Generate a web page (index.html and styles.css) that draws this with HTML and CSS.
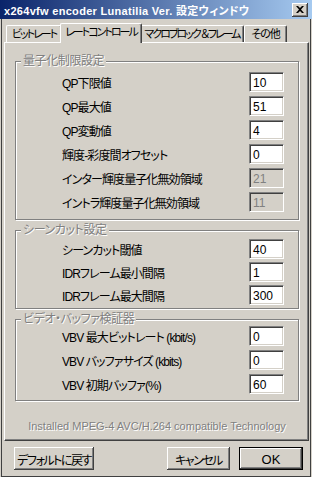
FILE: index.html
```html
<!DOCTYPE html>
<html lang="ja">
<head>
    <meta charset="UTF-8">
    <title>x264vfw encoder Lunatilia Ver. 設定ウィンドウ</title>
    <link rel="stylesheet" href="styles.css">
</head>
<body>
    <div class="window">
        <div class="titlebar">
            <span class="title">x264vfw encoder Lunatilia Ver. 設定ウィンドウ</span>
            <div class="close">
                <svg width="8" height="7" viewBox="0 0 8 7"><path d="M0 0h2l2 2 2-2h2L5 3.5 8 7H6L4 5 2 7H0l3-3.5z" fill="#000"/></svg>
            </div>
        </div>
        <div class="content">
            <div class="tabs">
                <div class="tab t1">ビットレート</div>
                <div class="tab t2 active">レートコントロール</div>
                <div class="tab t3">マクロブロック ＆フレーム</div>
                <div class="tab t4">その他</div>
            </div>
            <div class="panel">
                <div class="group g1">
                    <span class="legend">量子化制限設定</span>
                    <div class="row"><span>QP下限値</span><div class="field">10</div></div>
                    <div class="row"><span>QP最大値</span><div class="field">51</div></div>
                    <div class="row"><span>QP変動値</span><div class="field">4</div></div>
                    <div class="row"><span>輝度-彩度間オフセット</span><div class="field">0</div></div>
                    <div class="row"><span>インター輝度量子化無効領域</span><div class="field off">21</div></div>
                    <div class="row"><span>イントラ輝度量子化無効領域</span><div class="field off">11</div></div>
                </div>
                <div class="group g2">
                    <span class="legend">シーンカット設定</span>
                    <div class="row"><span>シーンカット閾値</span><div class="field">40</div></div>
                    <div class="row"><span>IDRフレーム最小間隔</span><div class="field">1</div></div>
                    <div class="row"><span>IDRフレーム最大間隔</span><div class="field">300</div></div>
                </div>
                <div class="group g3">
                    <span class="legend">ビデオ・バッファ検証器</span>
                    <div class="row"><span>VBV 最大ビットレート (kbit/s)</span><div class="field">0</div></div>
                    <div class="row"><span>VBV バッファサイズ (kbits)</span><div class="field">0</div></div>
                    <div class="row"><span>VBV 初期バッファ(%)</span><div class="field">60</div></div>
                </div>
                <div class="tech">Installed MPEG-4 AVC/H.264 compatible Technology</div>
            </div>
            <div class="buttons">
                <div class="btn reset">デフォルトに戻す</div>
                <div class="btn cancel">キャンセル</div>
                <div class="btn ok">OK</div>
            </div>
        </div>
    </div>
</body>
</html>
```

FILE: styles.css
```css
* {
    box-sizing: border-box;
}

body {
    margin: 0;
    background-color: #d4d0c8;
    font-family: "Liberation Sans", "Noto Sans CJK JP", sans-serif;
    font-size: 12px;
    color: #000;
    font-feature-settings: "palt";
}

.window {
    width: 310px;
    height: 477px;
    margin-left: 1px;
    display: flex;
    flex-direction: column;
    border-left: 1px solid #404040;
    border-right: 1px solid #404040;
    border-bottom: 1px solid #404040;
}

/* Titelleiste */
.titlebar {
    height: 19px;
    margin-left: -2px;
    margin-right: -2px;
    padding: 0 4px 0 4px;
    display: flex;
    align-items: center;
    justify-content: space-between;
    background: linear-gradient(to right, #0a246a, #a6caf0);
}

.title {
    color: white;
    font-weight: bold;
    font-size: 11px;
    letter-spacing: 0.3px;
    white-space: nowrap;
}

.close {
    width: 16px;
    height: 14px;
    display: flex;
    align-items: center;
    justify-content: center;
    background-color: #d4d0c8;
    box-shadow: inset -1px -1px #404040, inset 1px 1px #fff, inset -2px -2px #808080;
}

.content {
    flex: 1;
    display: flex;
    flex-direction: column;
    padding: 4px 1px 0 2px;
}

/* Reiter */
.tabs {
    display: flex;
    align-items: flex-end;
    height: 19px;
    padding-left: 2px;
    position: relative;
    z-index: 1;
}

.tab {
    height: 17px;
    border-top: 1px solid #fff;
    border-left: 1px solid #fff;
    border-right: 1px solid #404040;
    border-radius: 2px 2px 0 0;
    box-shadow: inset -1px 0 #808080;
    text-align: center;
    font-size: 11px;
    letter-spacing: -2px;
    line-height: 16px;
    white-space: nowrap;
    background-color: #d4d0c8;
}

.t1 { width: 56px; }
.t2 { width: 82px; }
.t3 { width: 104px; }
.t4 { width: 43px; letter-spacing: -1px; }

.tab.active {
    height: 20px;
    margin: 0 -2px -1px -2px;
    line-height: 17px;
    position: relative;
    z-index: 2;
}

.panel {
    height: 399px;
    border-top: 1px solid #fff;
    border-left: 1px solid #fff;
    border-right: 1px solid #404040;
    border-bottom: 1px solid #404040;
    box-shadow: inset -1px -1px #808080;
    padding: 18px 9px 0 10px;
}

/* Gruppenrahmen */
.group {
    position: relative;
    border: 1px solid #808080;
    box-shadow: inset 1px 1px #fff, 1px 1px #fff;
    display: flex;
    flex-direction: column;
    gap: 4px;
    padding: 10px 14px 7px 46px;
    margin-bottom: 10px;
}

.g2 {
    gap: 3px;
    padding-top: 8px;
    padding-bottom: 3px;
}

.g3 {
    padding-top: 6px;
    padding-bottom: 6px;
}

.legend {
    position: absolute;
    left: 5px;
    top: -8px;
    padding: 0 2px;
    background-color: #d4d0c8;
    color: #808080;
    text-shadow: 1px 1px #fff;
    letter-spacing: -0.4px;
    line-height: 14px;
}

.row {
    height: 20px;
    display: flex;
    align-items: center;
    justify-content: space-between;
    white-space: nowrap;
    letter-spacing: -0.9px;
}

.field {
    width: 35px;
    height: 20px;
    padding: 3px 0 0 3px;
    line-height: 14px;
    letter-spacing: 0;
    background-color: white;
    border-top: 1px solid #808080;
    border-left: 1px solid #808080;
    border-right: 1px solid #fff;
    border-bottom: 1px solid #fff;
    box-shadow: inset 1px 1px #404040, inset -1px -1px #d4d0c8;
}

.field.off {
    background-color: #d4d0c8;
    color: #808080;
}

.tech {
    margin-top: 19px;
    text-align: center;
    font-size: 11px;
    color: #808080;
    text-shadow: 1px 1px #fff;
}

/* Knöpfe */
.buttons {
    display: flex;
    padding: 6px 0 0 10px;
}

.btn {
    height: 23px;
    display: flex;
    align-items: center;
    justify-content: center;
    padding-top: 1px;
    box-shadow: inset -1px -1px #404040, inset 1px 1px #fff, inset -2px -2px #808080;
    white-space: nowrap;
    letter-spacing: -1.5px;
}

.reset { width: 80px; }
.cancel { width: 63px; margin-left: 73px; }

.ok {
    width: 64px;
    margin-left: 9px;
    border: 1px solid #000;
    letter-spacing: 0;
    font-size: 13px;
}
```
